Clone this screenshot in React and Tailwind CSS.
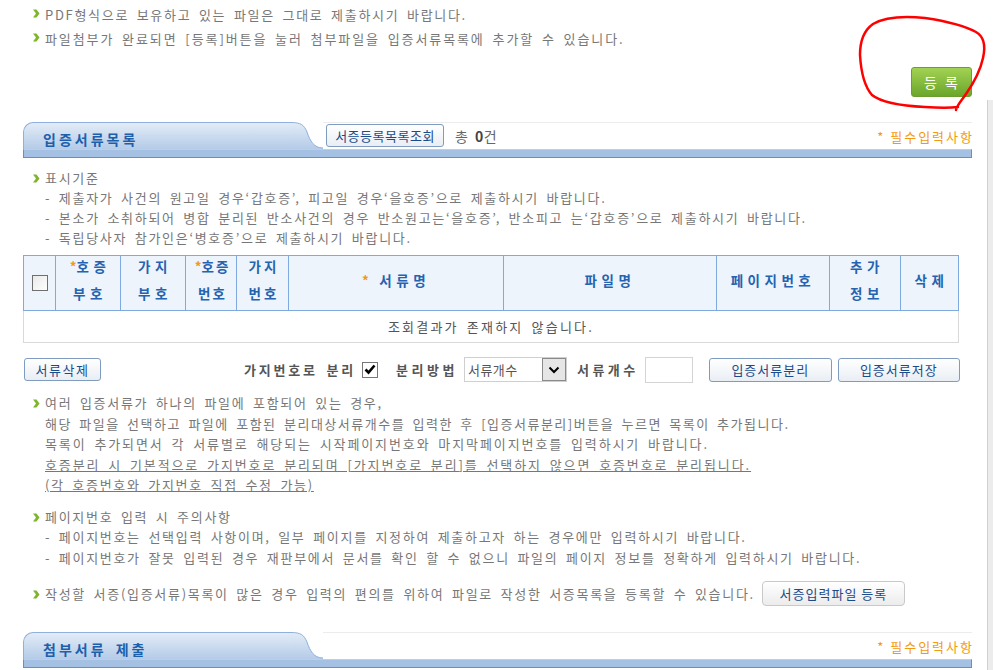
import React from 'react';

const txt = "font-['Noto_Sans_CJK_KR',sans-serif]";

// small green arrow bullet
const Bullet = () => (
  <svg width="7" height="9" viewBox="0 0 7 9" className="absolute left-[-12px] top-[6px]">
    <path d="M0 0.5 L3.5 0.5 L6.5 4.5 L3.5 8.5 L0 8.5 L3 4.5 Z" fill="#7fb52d" />
  </svg>
);

function Line({ bullet, children, className = '' }) {
  return (
    <div className={`relative ${className}`}>
      {bullet && <Bullet />}
      {children}
    </div>
  );
}

function SectionHeader({ id, title, children }) {
  return (
    <div>
      <div className="flex h-[27px]">
        <div className="h-full w-[268px] rounded-tl-[10px] border-l border-t border-[#8eb0da] bg-gradient-to-b from-[#e3ecf7] to-[#b4cbe8] pl-[19px] pt-[6px] text-[14px] font-bold tracking-[3px] text-[#1d5fab]">
          {title}
        </div>
        <svg width="32" height="27" viewBox="0 0 32 27" className="shrink-0">
          <defs>
            <linearGradient id={id} x1="0" y1="0" x2="0" y2="1">
              <stop offset="0" stopColor="#e3ecf7" />
              <stop offset="1" stopColor="#b4cbe8" />
            </linearGradient>
          </defs>
          <path d="M0 0.5 C10 0.5 13 3 16 10 C19 19 23 26 32 26 L32 27 L0 27 Z" fill={`url(#${id})`} />
          <path d="M0 0.5 C10 0.5 13 3 16 10 C19 19 23 26 32 26" fill="none" stroke="#8eb0da" />
        </svg>
        <div className="flex flex-1 items-start border-t border-[#ececec]">{children}</div>
      </div>
      <div className="h-[9px] border border-[#6690c1] border-t-[#b9cfea] bg-[#a4c0e2]" />
    </div>
  );
}

const Btn = ({ children, className = '' }) => (
  <button className={`rounded-[3px] border border-[#7f9cc0] bg-gradient-to-b from-white to-[#e9eef4] text-[13px] text-[#1a4c8c] ${className}`}>
    {children}
  </button>
);

const Star = () => <span className="tracking-normal text-[#f39a0f]">*</span>;

const Required = () => (
  <span className="-mr-[2px] ml-auto mt-[4px] text-[13px] tracking-[2px] text-[#f39a0f] [word-spacing:0px]">* 필수입력사항</span>
);

// header cell content, nudged up a little like the original
const H = ({ children }) => <div className="-translate-y-[3px]">{children}</div>;

export default function App() {
  return (
    <div className={`relative h-[670px] w-[993px] overflow-hidden bg-white ${txt} text-[13px] tracking-[1.7px] text-[#777] [word-spacing:3px]`}>
      <div className="pl-[45px] pt-[3px] leading-[24px]">
        <Line bullet>PDF형식으로 보유하고 있는 파일은 그대로 제출하시기 바랍니다.</Line>
        <Line bullet className="tracking-[1.9px]">파일첨부가 완료되면 [등록]버튼을 눌러 첨부파일을 입증서류목록에 추가할 수 있습니다.</Line>
      </div>

      <div className="flex justify-end pr-[21px] pt-[16px]">
        <button className="h-[30px] w-[61px] rounded-[3px] border border-[#6c9e2f] bg-gradient-to-b from-[#a2d253] to-[#6ba62a] text-[14px] tracking-[1px] text-white [word-spacing:3px]">
          등 록
        </button>
      </div>

      <div className="ml-[23px] mr-[21px] mt-[25px]">
        <SectionHeader id="g1" title="입증서류목록">
          <Btn className="ml-[3px] mt-[1px] h-[23px] w-[118px] tracking-[0.5px]">서증등록목록조회</Btn>
          <span className="ml-[11px] mt-[3px] text-[14px] tracking-[0.5px] text-[#666]">
            총 <b className="text-[#444]">0</b>건
          </span>
          <Required />
        </SectionHeader>
      </div>

      <div className="pl-[45px] pt-[10px] leading-[20px]">
        <Line bullet>표시기준</Line>
        <Line>- 제출자가 사건의 원고일 경우‘갑호증’, 피고일 경우‘을호증’으로 제출하시기 바랍니다.</Line>
        <Line>- 본소가 소취하되어 병합 분리된 반소사건의 경우 반소원고는‘을호증’, 반소피고 는‘갑호증’으로 제출하시기 바랍니다.</Line>
        <Line>- 독립당사자 참가인은‘병호증’으로 제출하시기 바랍니다.</Line>
      </div>

      <table className="ml-[23px] mt-[7px] w-[935px] table-fixed border-collapse">
        <colgroup>
          <col className="w-[32px]" />
          <col className="w-[65px]" />
          <col className="w-[65px]" />
          <col className="w-[51px]" />
          <col className="w-[52px]" />
          <col className="w-[215px]" />
          <col className="w-[213px]" />
          <col className="w-[113px]" />
          <col className="w-[71px]" />
          <col className="w-[58px]" />
        </colgroup>
        <thead>
          <tr className="h-[53px] bg-[#eef4fc] text-center text-[13.5px] font-bold leading-[27px] tracking-[4.5px] text-[#2563b0]">
            <th className="border border-[#7fa9df]">
              <span className="mx-auto block h-[16px] w-[16px] border border-[#6f6f6f] bg-gradient-to-br from-[#e9e9e9] to-white" />
            </th>
            <th className="border border-[#7fa9df] pl-[4px] font-bold"><H><Star />호증<br />부호</H></th>
            <th className="border border-[#7fa9df] pl-[4px] font-bold"><H>가지<br />부호</H></th>
            <th className="border border-[#7fa9df] pl-[3px] font-bold tracking-[2px]"><H><Star />호증<br />번호</H></th>
            <th className="border border-[#7fa9df] pl-[3px] font-bold tracking-[3px]"><H>가지<br />번호</H></th>
            <th className="border border-[#7fa9df] font-bold"><H><Star /> 서류명</H></th>
            <th className="border border-[#7fa9df] font-bold"><H>파일명</H></th>
            <th className="border border-[#7fa9df] font-bold"><H>페이지번호</H></th>
            <th className="border border-[#7fa9df] pl-[4px] font-bold"><H>추가<br />정보</H></th>
            <th className="border border-[#7fa9df] pl-[4px] font-bold"><H>삭제</H></th>
          </tr>
        </thead>
        <tbody>
          <tr className="h-[32px]">
            <td colSpan={10} className="border border-t-0 border-[#d9d9d9] text-center text-[13px] tracking-[2.2px] text-[#555]">
              조회결과가 존재하지 않습니다.
            </td>
          </tr>
        </tbody>
      </table>

      <div className="ml-[24px] mt-[13px] flex h-[27px] w-[936px] items-center text-[13px]">
        <Btn className="h-[23px] w-[77px] tracking-[1.5px]">서류삭제</Btn>
        <span className="ml-[143px] font-bold tracking-[2.8px] text-[#555]">가지번호로 분리</span>
        <span className="ml-[6px] flex h-[16px] w-[16px] items-center justify-center border border-[#777] bg-white">
          <svg width="12" height="11" viewBox="0 0 12 11">
            <path d="M1.5 5.5 L4.5 8.5 L10.5 1.5" fill="none" stroke="#000" strokeWidth="2.6" />
          </svg>
        </span>
        <span className="ml-[18px] font-bold tracking-[3.5px] text-[#555]">분리방법</span>
        <span className="ml-[6px] flex h-[25px] w-[103px] items-center border border-[#cfcfcf] pl-[3px] tracking-[0.5px] text-[#555]">
          서류개수
          <span className="ml-auto flex h-[23px] w-[24px] items-center justify-center border border-[#8a8a8a] bg-[#e6e6e6]">
            <svg width="12" height="8" viewBox="0 0 12 8">
              <path d="M1.5 1.5 L6 6 L10.5 1.5" fill="none" stroke="#000" strokeWidth="2" />
            </svg>
          </span>
        </span>
        <span className="ml-[10px] font-bold tracking-[3.5px] text-[#555]">서류개수</span>
        <span className="ml-[6px] h-[26px] w-[48px] border border-[#d4d4d4] bg-white" />
        <Btn className="ml-[16px] h-[24px] w-[123px] tracking-[1px]">입증서류분리</Btn>
        <Btn className="ml-[6px] h-[24px] w-[122px] tracking-[1px]">입증서류저장</Btn>
      </div>

      <div className="pl-[45px] pt-[10px] leading-[20.5px]">
        <Line bullet>여러 입증서류가 하나의 파일에 포함되어 있는 경우,</Line>
        <Line className="tracking-[1.5px]">해당 파일을 선택하고 파일에 포함된 분리대상서류개수를 입력한 후 [입증서류분리]버튼을 누르면 목록이 추가됩니다.</Line>
        <Line className="tracking-[1.9px]">목록이 추가되면서 각 서류별로 해당되는 시작페이지번호와 마지막페이지번호를 입력하시기 바랍니다.</Line>
        <Line className="underline tracking-[1.9px]">호증분리 시 기본적으로 가지번호로 분리되며 [가지번호로 분리]를 선택하지 않으면 호증번호로 분리됩니다.</Line>
        <Line className="underline">(각 호증번호와 가지번호 직접 수정 가능)</Line>
      </div>

      <div className="pl-[45px] pt-[11px] leading-[20.5px]">
        <Line bullet>페이지번호 입력 시 주의사항</Line>
        <Line>- 페이지번호는 선택입력 사항이며, 일부 페이지를 지정하여 제출하고자 하는 경우에만 입력하시기 바랍니다.</Line>
        <Line>- 페이지번호가 잘못 입력된 경우 재판부에서 문서를 확인 할 수 없으니 파일의 페이지 정보를 정확하게 입력하시기 바랍니다.</Line>
      </div>

      <div className="mt-[13px] flex items-center pl-[45px]">
        <Line bullet>작성할 서증(입증서류)목록이 많은 경우 입력의 편의를 위하여 파일로 작성한 서증목록을 등록할 수 있습니다.</Line>
        <button className="ml-[7px] h-[25px] w-[143px] rounded-[4px] border border-[#c9c9c9] bg-gradient-to-b from-white to-[#ececec] text-[13px] tracking-[1px] text-[#1a4c8c]">
          서증입력파일 등록
        </button>
      </div>

      <div className="ml-[23px] mr-[21px] mt-[26px]">
        <SectionHeader id="g2" title="첨부서류 제출">
          <Required />
        </SectionHeader>
      </div>

      {/* edge of the next frame on the right */}
      <div className="absolute bottom-0 right-0 top-[100px] w-[6px] border-l border-[#d0d0d0] bg-[#ececec]" />

      {/* red marker circle around the register button */}
      <svg className="pointer-events-none absolute left-0 top-0" width="993" height="670">
        <path
          d="M956 110 C957 105 962 100 966 94 C973 84 980 72 983 58 C986 45 983 36 976 32 C965 26 945 21 925 18 C905 16 885 17 873 24 C863 31 860 42 860 55 C861 72 864 86 872 95 C882 103 905 106 925 107 C940 108 950 108 958 107"
          fill="none"
          stroke="#ff0000"
          strokeWidth="2.5"
          strokeLinecap="round"
        />
      </svg>
    </div>
  );
}
